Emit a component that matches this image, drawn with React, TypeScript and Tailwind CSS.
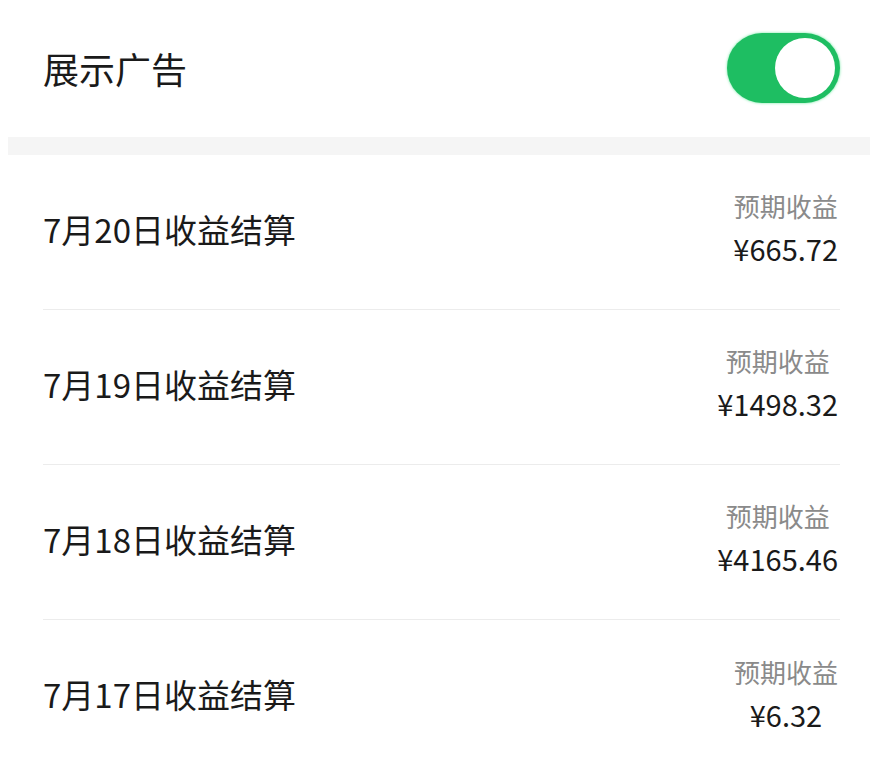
import { useState } from 'react'

const rows = [
  { date: '7月20日收益结算', amount: '¥665.72' },
  { date: '7月19日收益结算', amount: '¥1498.32' },
  { date: '7月18日收益结算', amount: '¥4165.46' },
  { date: '7月17日收益结算', amount: '¥6.32' },
]

export default function App() {
  const [on, setOn] = useState(true)

  return (
    <div
      className="w-[870px] h-[771px] overflow-hidden bg-white"
      style={{ fontFamily: '"Noto Sans CJK SC", "Noto Sans", sans-serif' }}
    >
      {/* Header */}
      <div className="h-[137px] flex items-center justify-between pl-[43px] pr-[30px] pb-[2px]">
        <span className="text-[36px] text-[#1a1a1a] leading-none">展示广告</span>
        <button
          onClick={() => setOn(!on)}
          className={`w-[113px] h-[70px] rounded-full p-[5px] flex items-center shadow-[0_0_3px_#6ee7a0] ${on ? 'bg-[#1ebe62] justify-end' : 'bg-gray-200 justify-start'}`}
        >
          <span className="w-[60px] h-[60px] rounded-full bg-white block" />
        </button>
      </div>

      {/* Divider band */}
      <div className="h-[18px] ml-[8px] bg-[#f5f5f5]" />

      {/* Rows */}
      <div className="pl-[43px] pr-[30px]">
        {rows.map((r, i) => (
          <div
            key={r.date}
            className={`h-[155px] flex items-center justify-between pb-[6px] ${i < rows.length - 1 ? 'border-b border-[#ececec]' : ''}`}
          >
            <span className="text-[33px] text-[#1a1a1a] leading-none">{r.date}</span>
            <div className="flex flex-col items-center gap-[15px] mr-[2px] mb-[2px]">
              <span className="text-[26px] text-[#8a8a8a] leading-none">预期收益</span>
              <span className="text-[29px] text-[#1a1a1a] leading-none">{r.amount}</span>
            </div>
          </div>
        ))}
      </div>
    </div>
  )
}
